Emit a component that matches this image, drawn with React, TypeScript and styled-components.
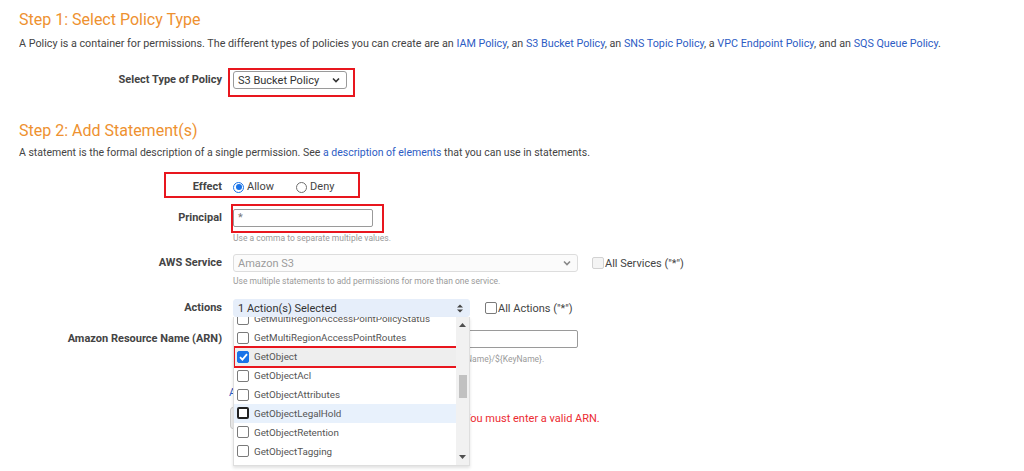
import React from 'react';
import styled, { createGlobalStyle } from 'styled-components';

const GlobalStyle = createGlobalStyle`
  html, body {
    margin: 0;
    padding: 0;
    background: #ffffff;
  }
  body {
    font-family: Roboto, "Liberation Sans", Arial, sans-serif;
    color: #444444;
  }
`;

const Page = styled.div`
  position: relative;
  box-sizing: border-box;
  width: 1024px;
  height: 471px;
  overflow: hidden;
  padding: 10px 19px 0;
`;

const StepTitle = styled.h2<{ $mt: number }>`
  margin: ${(p) => p.$mt}px 0 0;
  font-size: 16px;
  line-height: 20px;
  font-weight: 400;
  color: #ee9130;
`;

const Intro = styled.p<{ $mt: number; $size: number }>`
  margin: ${(p) => p.$mt}px 0 0;
  font-size: ${(p) => p.$size}px;
  line-height: 14px;
  color: #444444;
`;

const Link = styled.a<{ $size?: number; $shift?: number }>`
  color: #2d5cc4;
  text-decoration: none;
  font-size: ${(p) => (p.$size ? `${p.$size}px` : 'inherit')};
  margin-left: ${(p) => p.$shift ?? 0}px;
`;

const Row = styled.div<{ $mt: number }>`
  position: relative;
  display: flex;
  align-items: flex-start;
  margin-top: ${(p) => p.$mt}px;
`;

const Label = styled.div<{ $lh?: number }>`
  flex-shrink: 0;
  width: 203px;
  margin-right: 11px;
  text-align: right;
  font-size: 11px;
  font-weight: 700;
  line-height: ${(p) => p.$lh ?? 18}px;
  color: #444444;
`;

const Field = styled.div`
  position: relative;
  display: flex;
  flex-direction: column;
  align-items: flex-start;
`;

const Inline = styled.div<{ $gap: number; $mt?: number }>`
  display: flex;
  align-items: center;
  gap: ${(p) => p.$gap}px;
  margin-top: ${(p) => p.$mt ?? 0}px;
`;

// red annotation boxes drawn over the form
const Frame = styled.span<{ $l: number; $t: number; $w: number; $h: number }>`
  position: absolute;
  left: ${(p) => p.$l}px;
  top: ${(p) => p.$t}px;
  width: ${(p) => p.$w}px;
  height: ${(p) => p.$h}px;
  box-sizing: border-box;
  border: 2px solid #e8161e;
  pointer-events: none;
  z-index: 5;
`;

const SelectBox = styled.div<{ $w: number; $variant: 'normal' | 'disabled' | 'active' }>`
  box-sizing: border-box;
  display: flex;
  align-items: center;
  justify-content: space-between;
  width: ${(p) => p.$w}px;
  height: 18px;
  padding: 0 6px 0 4px;
  font-size: 11px;
  border-radius: 3px;
  border: 1px solid
    ${(p) => (p.$variant === 'normal' ? '#9a9a9a' : p.$variant === 'disabled' ? '#dddddd' : '#e6eefa')};
  background: ${(p) => (p.$variant === 'disabled' ? '#fbfbfb' : p.$variant === 'active' ? '#e6eefa' : '#ffffff')};
  color: ${(p) => (p.$variant === 'disabled' ? '#9b9b9b' : '#333333')};
`;

const TextInput = styled.div<{ $w: number }>`
  box-sizing: border-box;
  width: ${(p) => p.$w}px;
  height: 18px;
  padding: 0 4px;
  border: 1px solid #9a9a9a;
  border-radius: 2px;
  font-size: 11px;
  line-height: 16px;
  color: #777777;
`;

const Hint = styled.div<{ $mt: number }>`
  margin-top: ${(p) => p.$mt}px;
  font-size: 8.5px;
  line-height: 12px;
  color: #9a9a9a;
  white-space: nowrap;
`;

const Choice = styled.label`
  display: flex;
  align-items: center;
  font-size: 11px;
  line-height: 14px;
  color: #444444;
`;

const Radio = styled.span<{ $on?: boolean }>`
  box-sizing: border-box;
  display: inline-flex;
  align-items: center;
  justify-content: center;
  width: 11px;
  height: 11px;
  margin-right: 3px;
  border-radius: 50%;
  border: 1px solid ${(p) => (p.$on ? '#1a73e8' : '#6f6f6f')};
  &::after {
    content: '';
    display: ${(p) => (p.$on ? 'block' : 'none')};
    width: 6px;
    height: 6px;
    border-radius: 50%;
    background: #1a73e8;
  }
`;

const Check = styled.span<{ $state?: 'off' | 'on' | 'disabled' | 'focus' }>`
  box-sizing: border-box;
  flex-shrink: 0;
  display: inline-flex;
  align-items: center;
  justify-content: center;
  width: 12px;
  height: 12px;
  border-radius: 2px;
  border: ${(p) =>
    p.$state === 'on'
      ? '1px solid #1a73e8'
      : p.$state === 'disabled'
        ? '1px solid #d2d2d2'
        : p.$state === 'focus'
          ? '2px solid #222222'
          : '1px solid #7a7a7a'};
  background: ${(p) => (p.$state === 'on' ? '#1a73e8' : p.$state === 'disabled' ? '#f4f4f4' : '#ffffff')};
`;

const CheckLabel = styled.span`
  margin-left: 1px;
  font-size: 11px;
  color: #444444;
`;

const Dropdown = styled.div`
  position: absolute;
  top: 18px;
  left: 0;
  z-index: 4;
  box-sizing: border-box;
  display: flex;
  width: 237px;
  height: 149px;
  background: #ffffff;
  border: 1px solid #dedede;
  border-top: none;
  box-shadow: 0 2px 3px rgba(0, 0, 0, 0.12);
`;

const Viewport = styled.div`
  flex: 1;
  overflow: hidden;
`;

const Track = styled.div<{ $offset: number }>`
  margin-top: ${(p) => -p.$offset}px;
`;

const Item = styled.div<{ $tone?: 'selected' | 'hover' }>`
  position: relative;
  display: flex;
  align-items: center;
  height: 18.9px;
  padding-left: 3px;
  background: ${(p) => (p.$tone === 'selected' ? '#eeeeee' : p.$tone === 'hover' ? '#e8f1fc' : 'transparent')};
  font-size: 9.8px;
  color: #555555;
  white-space: nowrap;
`;

const ItemText = styled.span`
  margin-left: 5px;
`;

const Scrollbar = styled.div`
  display: flex;
  flex-direction: column;
  align-items: center;
  width: 13px;
  background: #f1f1f1;
`;

const ScrollArrow = styled.div`
  display: flex;
  align-items: center;
  justify-content: center;
  width: 13px;
  height: 16px;
`;

const ScrollGutter = styled.div`
  flex: 1;
  width: 100%;
  display: flex;
  justify-content: center;
`;

const Thumb = styled.div<{ $top: number; $h: number }>`
  width: 8px;
  height: ${(p) => p.$h}px;
  margin-top: ${(p) => p.$top}px;
  background: #c1c1c1;
`;

const Button = styled.div`
  box-sizing: border-box;
  width: 90px;
  height: 22px;
  margin-left: -3px;
  border: 1px solid #cccccc;
  border-radius: 3px;
  background: #eeeeee;
  font-size: 11px;
  line-height: 20px;
  text-align: center;
  color: #333333;
`;

const ErrorText = styled.span`
  margin-left: 144px;
  font-size: 11px;
  color: #ec2b32;
`;

const Chevron = ({ color = '#333' }: { color?: string }) => (
  <svg width="8" height="6" viewBox="0 0 8 6">
    <polyline points="1,1.5 4,4.5 7,1.5" fill="none" stroke={color} strokeWidth="1.6" />
  </svg>
);

const UpDown = () => (
  <svg width="6" height="9" viewBox="0 0 6 9">
    <polygon points="0,3.5 3,0.5 6,3.5" fill="#444" />
    <polygon points="0,5.5 3,8.5 6,5.5" fill="#444" />
  </svg>
);

const Tri = ({ up }: { up?: boolean }) => (
  <svg width="7" height="4" viewBox="0 0 7 4">
    <polygon points={up ? '0,4 3.5,0 7,4' : '0,0 3.5,4 7,0'} fill="#505050" />
  </svg>
);

const Tick = () => (
  <svg width="9" height="8" viewBox="0 0 9 8">
    <polyline points="1,4.2 3.4,6.6 8,1.2" fill="none" stroke="#fff" strokeWidth="1.8" />
  </svg>
);

const actions = [
  { name: 'GetMultiRegionAccessPointPolicyStatus' },
  { name: 'GetMultiRegionAccessPointRoutes' },
  { name: 'GetObject', checked: true, tone: 'selected' as const, framed: true },
  { name: 'GetObjectAcl' },
  { name: 'GetObjectAttributes' },
  { name: 'GetObjectLegalHold', tone: 'hover' as const, focus: true },
  { name: 'GetObjectRetention' },
  { name: 'GetObjectTagging' },
];

export default function App() {
  return (
    <Page>
      <GlobalStyle />
      <StepTitle $mt={0}>Step 1: Select Policy Type</StepTitle>
      <Intro $mt={7} $size={10.75}>
        A Policy is a container for permissions. The different types of policies you can create are an{' '}
        <Link>IAM Policy</Link>, an <Link>S3 Bucket Policy</Link>, an <Link>SNS Topic Policy</Link>, a{' '}
        <Link>VPC Endpoint Policy</Link>, and an <Link>SQS Queue Policy</Link>.
      </Intro>

      <Row $mt={20}>
        <Label>Select Type of Policy</Label>
        <Field>
          <SelectBox $w={114} $variant="normal">
            S3 Bucket Policy
            <Chevron />
          </SelectBox>
        </Field>
        <Frame $l={209} $t={-3} $w={127} $h={29} />
      </Row>

      <StepTitle $mt={32}>Step 2: Add Statement(s)</StepTitle>
      <Intro $mt={5} $size={10.5}>
        A statement is the formal description of a single permission. See{' '}
        <Link>a description of elements</Link> that you can use in statements.
      </Intro>

      <Row $mt={20}>
        <Label $lh={14}>Effect</Label>
        <Inline $gap={22}>
          <Choice>
            <Radio $on />
            Allow
          </Choice>
          <Choice>
            <Radio />
            Deny
          </Choice>
        </Inline>
        <Frame $l={145} $t={-8} $w={196} $h={26} />
      </Row>

      <Row $mt={15}>
        <Label>Principal</Label>
        <Field>
          <TextInput $w={140}>*</TextInput>
          <Hint $mt={5}>Use a comma to separate multiple values.</Hint>
        </Field>
        <Frame $l={212} $t={-5} $w={153} $h={29} />
      </Row>

      <Row $mt={10}>
        <Label>AWS Service</Label>
        <Field>
          <Inline $gap={14}>
            <SelectBox $w={345} $variant="disabled">
              Amazon S3
              <Chevron color="#888" />
            </SelectBox>
            <Inline $gap={0}>
              <Check $state="disabled" />
              <CheckLabel>All Services ("*")</CheckLabel>
            </Inline>
          </Inline>
          <Hint $mt={3}>Use multiple statements to add permissions for more than one service.</Hint>
        </Field>
      </Row>

      <Row $mt={12}>
        <Label>Actions</Label>
        <Field>
          <Inline $gap={15}>
            <SelectBox $w={237} $variant="active">
              1 Action(s) Selected
              <UpDown />
            </SelectBox>
            <Inline $gap={0}>
              <Check />
              <CheckLabel>All Actions ("*")</CheckLabel>
            </Inline>
          </Inline>
          <Dropdown>
            <Viewport>
              <Track $offset={7.5}>
                {actions.map((a) => (
                  <Item key={a.name} $tone={a.tone}>
                    <Check $state={a.checked ? 'on' : a.focus ? 'focus' : 'off'}>{a.checked && <Tick />}</Check>
                    <ItemText>{a.name}</ItemText>
                    {a.framed && <Frame $l={-1} $t={-1} $w={226} $h={22} />}
                  </Item>
                ))}
              </Track>
            </Viewport>
            <Scrollbar>
              <ScrollArrow>
                <Tri up />
              </ScrollArrow>
              <ScrollGutter>
                <Thumb $top={42} $h={23} />
              </ScrollGutter>
              <ScrollArrow>
                <Tri />
              </ScrollArrow>
            </Scrollbar>
          </Dropdown>
        </Field>
      </Row>

      <Row $mt={13}>
        <Label>Amazon Resource Name (ARN)</Label>
        <Field>
          <TextInput $w={345} />
          <Hint $mt={5}>ARN should follow the following format: arn:aws:s3:::$&#123;BucketName&#125;/$&#123;KeyName&#125;.</Hint>
          <Hint $mt={22}>
            <Link $size={11} $shift={-4}>
              Add Conditions (Optional)
            </Link>
          </Hint>
          <Inline $gap={0} $mt={8}>
            <Button>Add Statement</Button>
            <ErrorText>You must enter a valid ARN.</ErrorText>
          </Inline>
        </Field>
      </Row>
    </Page>
  );
}
